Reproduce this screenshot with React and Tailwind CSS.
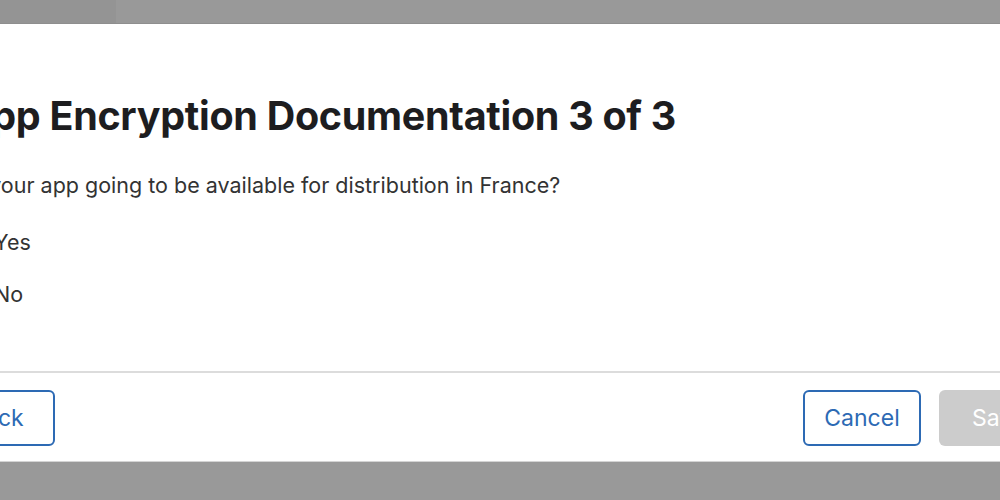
export default function App() {
  return (
    <div className="w-[1000px] h-[500px] overflow-hidden bg-[#999999] flex flex-col font-['Inter','Noto_Sans',sans-serif]">
      {/* backdrop strip above the sheet */}
      <div className="h-[24px] shrink-0 flex border-b border-[#8e8e8e]">
        <div className="w-[116px] bg-[#949494]" />
      </div>

      {/* SHEET */}
      <div className="h-[438px] shrink-0 w-[1127px] ml-[-38px] bg-white border-b border-[#d4d4d4] flex flex-col">
        <div className="flex-1 pt-[68px]">
          <h2 className="text-[39.5px] leading-[48px] font-bold text-[#1d1d1f] tracking-[-0.3px]">
            App Encryption Documentation 3 of 3
          </h2>

          <p className="mt-[32px] pl-[4px] text-[21.5px] leading-[26px] text-[#333333]">
            Is your app going to be available for distribution in France?
          </p>

          <div className="mt-[31px] flex flex-col gap-[26px] text-[21.5px] leading-[26px] text-[#333333]">
            <label className="flex items-center gap-[18px]">
              <span className="w-[14px] h-[14px] rounded-full border border-[#888]" />
              Yes
            </label>
            <label className="flex items-center gap-[18px]">
              <span className="w-[14px] h-[14px] rounded-full border border-[#888]" />
              No
            </label>
          </div>
        </div>

        {/* FOOTER */}
        <div className="border-t-2 border-[#dcdcdc] h-[90px] pt-[17px] flex items-start justify-between">
          <button className="ml-[-26px] h-[56px] pl-[32px] pr-[29px] rounded-[6px] border-2 border-[#2d6ab4] text-[#2d6ab4] text-[23px]">
            Back
          </button>

          <div className="flex items-center gap-[18px]">
            <button className="h-[56px] w-[118px] rounded-[6px] border-2 border-[#2d6ab4] text-[#2d6ab4] text-[23px]">
              Cancel
            </button>
            <button className="h-[56px] w-[150px] pl-[33px] text-left rounded-[6px] bg-[#cccccc] text-white text-[23px]">
              Save
            </button>
          </div>
        </div>
      </div>
    </div>
  );
}
